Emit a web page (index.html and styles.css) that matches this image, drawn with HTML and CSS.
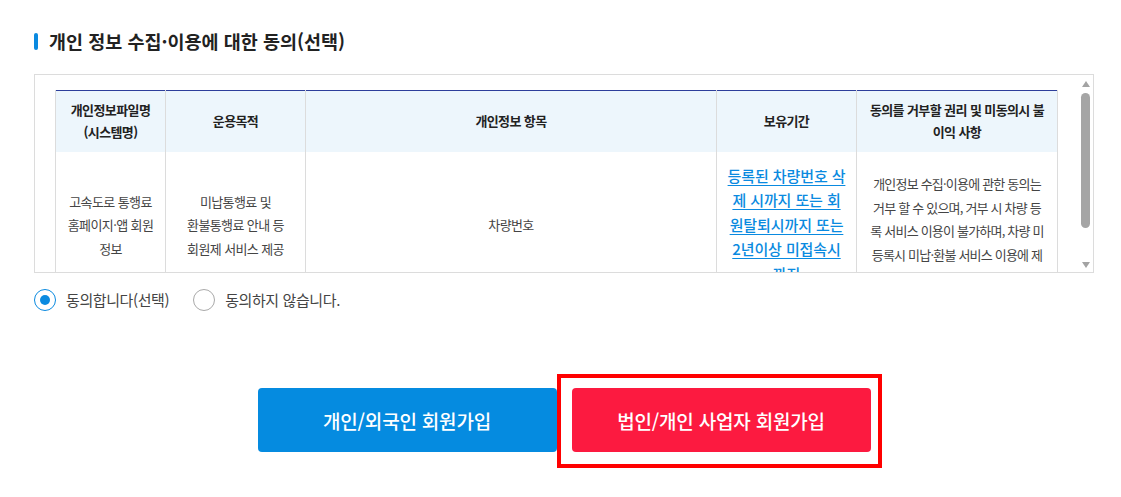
FILE: index.html
```html
<!DOCTYPE html>
<html lang="ko">
<head>
<meta charset="utf-8">
<title>개인 정보 수집·이용에 대한 동의(선택)</title>
<link rel="stylesheet" href="styles.css">
</head>
<body>
<div class="page">
  <h2 class="sec-title">개인 정보 수집·이용에 대한 동의(선택)</h2>
  <div class="scroll-box">
    <div class="scroll-content">
      <table class="info-table">
        <colgroup>
          <col class="c1"><col class="c2"><col class="c3"><col class="c4"><col class="c5">
        </colgroup>
        <thead>
          <tr>
            <th>개인정보파일명<br>(시스템명)</th>
            <th>운용목적</th>
            <th>개인정보 항목</th>
            <th>보유기간</th>
            <th>동의를 거부할 권리 및 미동의시 불이익 사항</th>
          </tr>
        </thead>
        <tbody>
          <tr>
            <td>고속도로 통행료 홈페이지·앱 회원 정보</td>
            <td>미납통행료 및<br>환불통행료 안내 등<br>회원제 서비스 제공</td>
            <td>차량번호</td>
            <td class="link-cell"><a href="#">등록된 차량번호 삭제 시까지 또는 회원탈퇴시까지 또는 2년이상 미접속시까지</a></td>
            <td class="note-cell">개인정보 수집·이용에 관한 동의는<br>거부 할 수 있으며, 거부 시 차량 등<br>록 서비스 이용이 불가하며, 차량 미<br>등록시 미납·환불 서비스 이용에 제<br>한될 수 있음</td>
          </tr>
        </tbody>
      </table>
    </div>
    <div class="scrollbar" aria-hidden="true">
      <span class="arrow up"></span>
      <span class="track"><span class="thumb"></span></span>
      <span class="arrow down"></span>
    </div>
  </div>
  <div class="agree-row">
    <label class="radio"><span class="dot checked"></span><span class="radio-text">동의합니다(선택)</span></label>
    <label class="radio"><span class="dot"></span><span class="radio-text">동의하지 않습니다.</span></label>
  </div>
  <div class="btn-row">
    <a href="#" class="btn btn-blue">개인/외국인 회원가입</a>
    <a href="#" class="btn btn-red">법인/개인 사업자 회원가입</a>
  </div>
</div>
</body>
</html>
```

FILE: styles.css
```css
* { box-sizing: border-box; }
html, body { margin: 0; padding: 0; background: #fff; }
body {
  font-family: "Noto Sans CJK KR", "Noto Sans", sans-serif;
  color: #333;
}
.page {
  width: 1060px;
  margin-left: 34px;
  padding-top: 28px;
  padding-bottom: 30px;
}
.sec-title {
  margin: 0 0 20px 0;
  display: flex;
  align-items: center;
  gap: 11px;
  font-size: 18.5px;
  line-height: 26px;
  font-weight: 700;
  color: #222;
  letter-spacing: 0;
}
.sec-title::before {
  content: "";
  width: 4px;
  height: 17px;
  border-radius: 2px;
  background: #0a8ae0;
}
.scroll-box {
  height: 199px;
  border: 1px solid #dcdcdc;
  display: flex;
  overflow: hidden;
}
.scroll-content {
  flex: 1;
  min-width: 0;
  overflow: hidden;
  padding: 15px 21px 0 20px;
}
.scrollbar {
  width: 15px;
  flex: none;
  display: flex;
  flex-direction: column;
  align-items: center;
  padding: 6px 0 4px;
}
.arrow {
  width: 0;
  height: 0;
  border-left: 4.5px solid transparent;
  border-right: 4.5px solid transparent;
}
.arrow.up { border-bottom: 6px solid #a3a3a3; }
.arrow.down { border-top: 6px solid #a3a3a3; }
.track {
  flex: 1;
  width: 100%;
  display: flex;
  justify-content: center;
  padding: 6px 0 0 0;
}
.thumb {
  width: 9px;
  height: 135px;
  border-radius: 5px;
  background: #a5a5a5;
}
.info-table {
  width: 100%;
  border-collapse: collapse;
  table-layout: fixed;
  border-top: 1px solid #2d3e9b;
  letter-spacing: -0.6px;
}
.c1 { width: 110px; }
.c2 { width: 140px; }
.c3 { width: 411px; }
.c4 { width: 140px; }
.c5 { width: 201px; }
.info-table th {
  background: #edf6fc;
  font-size: 13px;
  font-weight: 700;
  color: #222;
  line-height: 22px;
  height: 61px;
  padding: 8px 10px;
  border-left: 1px solid #dcdcdc;
  border-right: 1px solid #dcdcdc;
  text-align: center;
  vertical-align: middle;
}
.info-table td {
  font-size: 13px;
  color: #444;
  line-height: 23.5px;
  padding: 12px 8px;
  border: 1px solid #dcdcdc;
  border-top: 0;
  text-align: center;
  vertical-align: middle;
}
.info-table td.link-cell { padding: 12px 10px; }
.info-table td.note-cell {
  padding: 18px 2px 6px;
  white-space: nowrap;
  letter-spacing: -0.8px;
}
.link-cell a {
  color: #0a8ae0;
  font-size: 15px;
  font-weight: 500;
  line-height: 24px;
  letter-spacing: -0.1px;
  text-decoration: underline;
  text-underline-offset: 3px;
}
.agree-row {
  margin-top: 16px;
  display: flex;
  align-items: center;
  gap: 24px;
}
.radio {
  display: flex;
  align-items: center;
  gap: 10px;
  cursor: pointer;
}
.dot {
  width: 22px;
  height: 22px;
  border-radius: 50%;
  border: 1px solid #a9a9a9;
  background: #fff;
  display: flex;
  align-items: center;
  justify-content: center;
}
.dot.checked { border-color: #0a8ae0; }
.dot.checked::after {
  content: "";
  width: 10px;
  height: 10px;
  border-radius: 50%;
  background: #0a8ae0;
}
.radio-text {
  font-size: 15px;
  color: #444;
  line-height: 22px;
  letter-spacing: -0.4px;
}
.btn-row {
  margin-top: 77px;
  display: flex;
  justify-content: center;
  gap: 15px;
}
.btn {
  position: relative;
  width: 299px;
  height: 64px;
  border-radius: 4px;
  display: flex;
  align-items: center;
  justify-content: center;
  color: #fff;
  font-size: 19px;
  font-weight: 500;
  text-decoration: none;
  letter-spacing: -0.2px;
}
.btn-blue { background: #058be0; }
.btn-red { background: #fc1a40; }
.btn-red::after {
  content: "";
  position: absolute;
  top: -14px;
  bottom: -16px;
  left: -15px;
  right: -11px;
  border: 4px solid #ff0000;
  pointer-events: none;
}
```
